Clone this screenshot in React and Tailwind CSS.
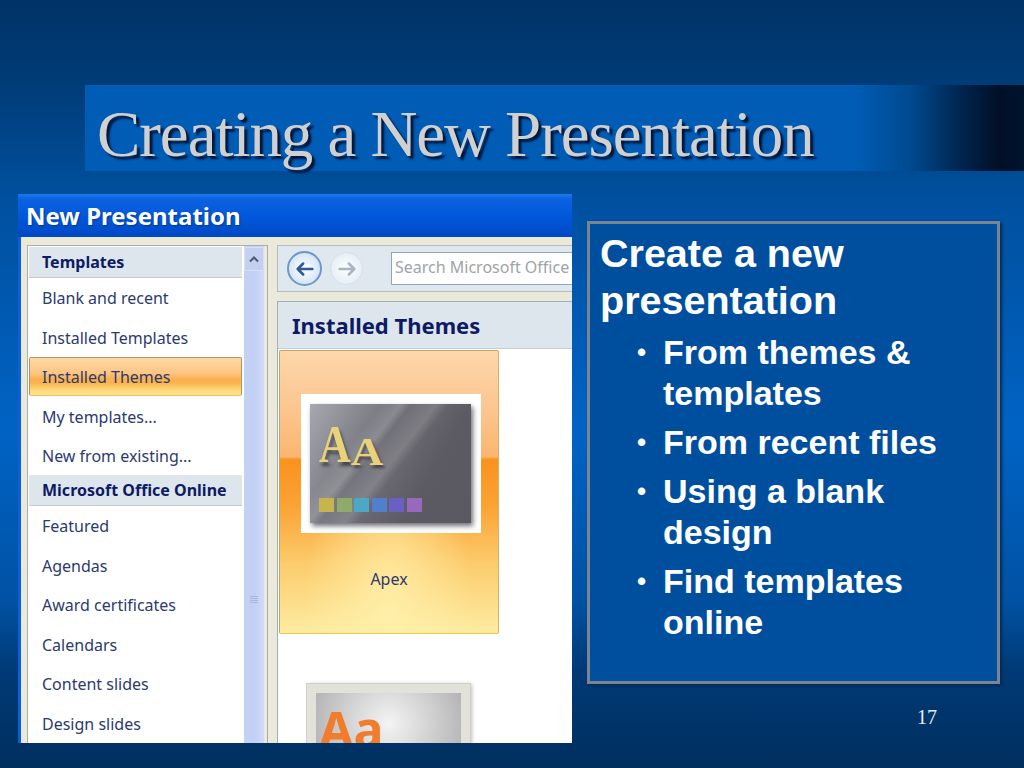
const ui = { fontFamily: '"Noto Sans", "Open Sans", sans-serif' };

function Row({ children, selected }) {
  return (
    <div className={`h-[39.5px] shrink-0 flex items-center text-[16px] text-[#2c3a6e] ${selected ? "pl-[12px] rounded-[2px] border border-[#b8925a] border-b-[#eec060] bg-[linear-gradient(to_bottom,#fdd9a6_0%,#fcc684_40%,#fbb050_58%,#fbb44e_68%,#fdd77a_85%,#fde38c_100%)]" : "pl-[13px]"}`}>
      <span className="mt-[2px]">{children}</span>
    </div>
  );
}

function Head({ children }) {
  return (
    <div className="h-[30.5px] shrink-0 flex items-center pl-[13px] bg-[#dde6ec] border-b border-[#c6ccd0] text-[16px] font-bold text-[#0f1a66]">
      <span className="mt-[1px]">{children}</span>
    </div>
  );
}

function Arrow({ dir, active }) {
  const c = active ? "#2f5a96" : "#a9b4c4";
  const d = dir === "l" ? "M20 12H4M10 6l-6 6 6 6" : "M4 12h16M14 6l6 6-6 6";
  return (
    <div className={`shrink-0 rounded-full flex items-center justify-center ${active ? "w-[35px] h-[35px] border-2 border-[#6f98c8] bg-[radial-gradient(circle,#ffffff,#c4dcf4)]" : "w-[33px] h-[33px] border border-[#d5e0ea] bg-[radial-gradient(circle,#ffffff,#dbe7f4)]"}`}>
      <svg width="22" height="22" viewBox="0 0 24 24" fill="none" stroke={c} strokeWidth="2.8" strokeLinecap="round" strokeLinejoin="round"><path d={d} /></svg>
    </div>
  );
}

function Bullet({ children }) {
  return (
    <li className="flex">
      <span className="w-[26px] ml-[37px] shrink-0 text-[26px]">•</span>
      <span>{children}</span>
    </li>
  );
}

export default function App() {
  return (
    <div className="relative w-[1024px] h-[768px] overflow-hidden flex flex-col bg-[linear-gradient(to_bottom,#003366_0,#003c78_85px,#00509f_200px,#0063c4_430px,#0052a4_600px,#003a76_670px,#002f5f_768px)]">
      {/* title band */}
      <div className="mt-[85px] ml-[85px] h-[86px] shrink-0 flex items-center pl-[12px] bg-[linear-gradient(to_right,#005cb4_0,#005cb4_770px,#004a90_825px,#00224a_880px,#000f26_915px,#00142e_939px)]">
        <h1 className="text-[65px] tracking-[-1.07px] leading-none text-[#d0d0d0] mt-[12px] whitespace-nowrap [text-shadow:3px_3px_2px_#00163a]" style={{ fontFamily: '"Liberation Serif", serif' }}>
          Creating a New Presentation
        </h1>
      </div>

      <div className="flex mt-[23px] ml-[18px] items-start">
        {/* embedded dialog picture */}
        <div className="w-[554px] h-[549px] shrink-0 overflow-hidden flex flex-col bg-[#ebe9d9]" style={ui}>
          <div className="h-[43px] shrink-0 flex items-center pl-[8px] bg-[linear-gradient(to_bottom,#1a78ec_0%,#0a62e0_12%,#0258dc_50%,#0048c4_100%)] text-white font-bold text-[24px] [text-shadow:1px_1px_1px_#003a9a]">
            New Presentation
          </div>
          <div className="flex flex-1 min-h-0 pt-[8px] pl-[6px] border-l-[3px] border-[#0a5ee0]">
            {/* left pane */}
            <div className="w-[241px] h-[510px] shrink-0 border border-[#a6aeb4] bg-white flex">
              <div className="w-[213px] shrink-0 ml-[1px] flex flex-col pt-[1px]">
                <Head>Templates</Head>
                <Row>Blank and recent</Row>
                <Row>Installed Templates</Row>
                <Row selected>Installed Themes</Row>
                <Row>My templates...</Row>
                <Row>New from existing...</Row>
                <Head>Microsoft Office Online</Head>
                <Row>Featured</Row>
                <Row>Agendas</Row>
                <Row>Award certificates</Row>
                <Row>Calendars</Row>
                <Row>Content slides</Row>
                <Row>Design slides</Row>
              </div>
              <div className="w-[20px] ml-[2px] shrink-0 flex flex-col items-center bg-[linear-gradient(to_right,#c4d2f2,#c0cff4,#d0dcf8)]">
                <div className="w-[20px] h-[24px] shrink-0 mt-[1px] rounded-[2px] border border-[#d8e0f4] bg-[#c3d0f2] flex items-center justify-center">
                  <svg width="12" height="8" viewBox="0 0 12 8" fill="none" stroke="#4d5a70" strokeWidth="2"><path d="M2 6.5 6 2.5l4 4" /></svg>
                </div>
                <div className="mt-[325px] w-[8px] flex flex-col gap-[1px]">
                  <div className="h-[1px] bg-[#a9b8d8]" />
                  <div className="h-[1px] bg-[#a9b8d8]" />
                  <div className="h-[1px] bg-[#a9b8d8]" />
                  <div className="h-[1px] bg-[#a9b8d8]" />
                </div>
              </div>
              <div className="w-[3px] shrink-0 bg-[#ebe9d9]" />
            </div>

            {/* right pane */}
            <div className="ml-[9px] flex-1 flex flex-col min-w-0">
              <div className="h-[47px] shrink-0 border border-[#b4bcc2] border-r-0 bg-[#dfe8ee] flex items-center pl-[9px]">
                <Arrow dir="l" active />
                <div className="w-[8px] shrink-0" />
                <Arrow dir="r" />
                <div className="ml-[28px] flex-1 min-w-0 h-[33px] bg-white border border-[#8fa6c0] border-r-0 flex items-center pl-[3px] text-[16px] text-[#a0a4a8] whitespace-nowrap overflow-hidden">
                  <span className="mb-[4px]">Search Microsoft Office</span>
                </div>
              </div>
              <div className="mt-[9px] flex-1 min-h-0 overflow-hidden border-l border-t border-[#9fb0bc] bg-white flex flex-col">
                <div className="h-[47px] shrink-0 flex items-center pl-[14px] bg-[#dde6ec] border-b border-[#c6ccd0] text-[22px] font-bold text-[#0f1a66]">
                  <span>Installed Themes</span>
                </div>
                {/* theme card */}
                <div className="ml-[1px] mt-[1px] w-[220px] h-[284px] shrink-0 rounded-[2px] border border-[#c8a468] border-b-[#f4c840] border-r-[#d8b060] flex flex-col items-center bg-[radial-gradient(ellipse_at_50%_95%,rgba(255,240,170,0.9),rgba(255,240,170,0)_55%),linear-gradient(to_bottom,#fdd7ab_0%,#fcc690_20%,#fbb670_37.5%,#f9921e_38.5%,#fba335_55%,#fccb6c_75%,#fdeca2_100%)]">
                  <div className="mt-[43px] ml-[3px] w-[180px] h-[139px] shrink-0 bg-white flex items-center justify-center">
                    <div className="w-[161px] h-[119px] flex flex-col pl-[9px] bg-[linear-gradient(128deg,rgba(255,255,255,0)_28%,rgba(255,255,255,0.16)_36%,rgba(255,255,255,0)_40%,rgba(255,255,255,0.14)_50%,rgba(255,255,255,0)_55%),linear-gradient(120deg,#a8a8b0_0%,#77777f_35%,#5c5a62_70%,#5a5860_100%)] shadow-[2px_3px_5px_#70707a]">
                      <div className="mt-[28px] h-[40px] flex items-end font-bold text-[#e8d27a] [text-shadow:2px_3px_3px_#45444c] leading-none" style={{ fontFamily: '"Liberation Serif", serif' }}>
                        <span className="text-[44px] inline-block origin-bottom scale-y-[1.2]">A</span>
                        <span className="text-[45px] inline-block origin-bottom scale-y-[0.87]">A</span>
                      </div>
                      <div className="mt-[26px] flex gap-[2.6px]">
                        {["#c8b44e", "#90aa6c", "#4ca8c4", "#5080cc", "#6a60c4", "#9868bc"].map((c) => (
                          <div key={c} className="w-[15px] h-[14px]" style={{ background: c }} />
                        ))}
                      </div>
                    </div>
                  </div>
                  <div className="mt-[38px] text-[16px] text-[#2c3a6e] leading-none">Apex</div>
                </div>
                {/* next theme, cut off */}
                <div className="mt-[50px] ml-[29px] w-[163px] h-[60px] shrink-0 border-[9px] border-b-0 border-[#e2e2da] outline outline-[1px] outline-[#d0d0c8] bg-[radial-gradient(circle_at_50%_60%,#f4f4f4,#b4b4b6)] shadow-[2px_0_4px_#c0c0c0] overflow-hidden pl-[3px]">
                  <div className="text-[50px] font-bold text-[#f07c2c] leading-none mt-[11px]">Aa</div>
                </div>
              </div>
            </div>
          </div>
        </div>

        {/* text panel */}
        <div className="ml-[15px] mt-[27px] flex flex-col">
          <div className="w-[413px] h-[463px] border-[3px] border-[#7a8594] bg-[#004f9f] shadow-[2px_2px_3px_#002a55] text-white font-bold pl-[10px] pt-[6px]" style={{ fontFamily: '"Liberation Sans", Arial, sans-serif' }}>
            <div className="text-[39.5px] leading-[47px]">Create a new<br />presentation</div>
            <ul className="text-[34px] leading-[41px] mt-[8px] flex flex-col gap-[8px]">
              <Bullet>From themes &amp;<br />templates</Bullet>
              <Bullet>From recent files</Bullet>
              <Bullet>Using a blank<br />design</Bullet>
              <Bullet>Find templates<br />online</Bullet>
            </ul>
          </div>
          <div className="mt-[21px] ml-[330px] text-[20px] leading-[24px] text-[#e8eef4]" style={{ fontFamily: '"Liberation Serif", serif' }}>17</div>
        </div>
      </div>
    </div>
  );
}
